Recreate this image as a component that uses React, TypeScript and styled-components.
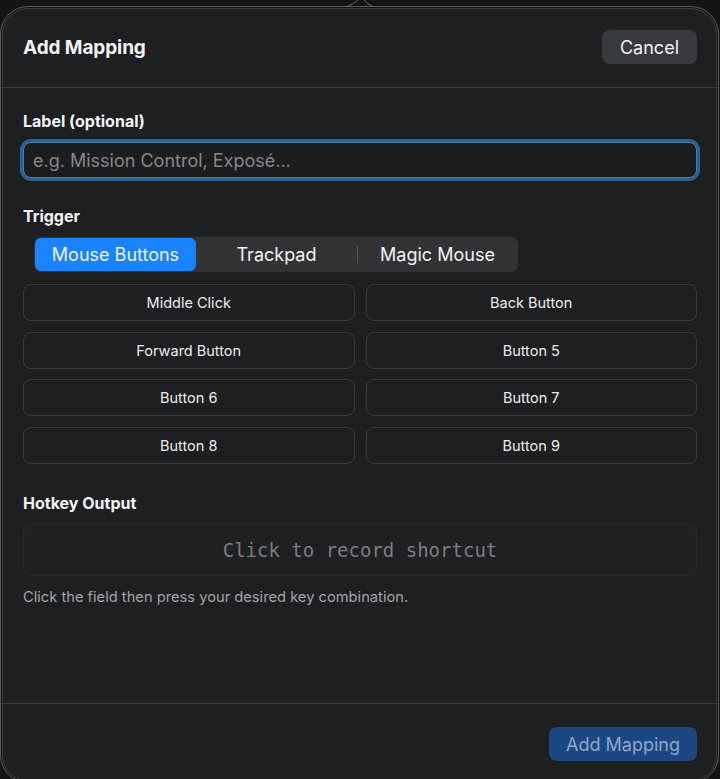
import styled, { createGlobalStyle } from "styled-components";

const GlobalStyle = createGlobalStyle`
	html, body {
		margin: 0;
		padding: 0;
		background: #141415;
		font-family: Inter, "Noto Sans", "Liberation Sans", sans-serif;
		-webkit-font-smoothing: antialiased;
	}
	* {
		box-sizing: border-box;
	}
`;

const Backdrop = styled.div`
	position: relative;
	width: 720px;
	height: 779px;
	overflow: hidden;
	padding-top: 6px;
`;

const Notch = styled.svg`
	position: absolute;
	top: 0;
	left: 340px;
`;

const Sheet = styled.div`
	width: 719px;
	height: 777px;
	display: flex;
	flex-direction: column;
	background: #1e1f21;
	border: 1px solid #58595c;
	border-radius: 28px;
	box-shadow: inset 0 0 0 1px #131314, inset 0 0 0 2px #3a3b3d;
	color: #f2f2f4;
`;

const Header = styled.div`
	height: 81px;
	display: flex;
	align-items: center;
	justify-content: space-between;
	padding: 0 21px 0 22px;
	border-bottom: 1px solid #3b3c3e;
`;

const Title = styled.h1`
	margin: 0;
	font-size: 19px;
	font-weight: 700;
	letter-spacing: -0.1px;
`;

const GhostButton = styled.button`
	height: 34px;
	padding: 0 18px;
	border: none;
	border-radius: 8px;
	background: #38393c;
	color: #f2f2f4;
	font-family: inherit;
	font-size: 18px;
`;

const Body = styled.div`
	flex: 1;
	display: flex;
	flex-direction: column;
	padding: 24px 21px 0 22px;
`;

const SectionLabel = styled.div<{ $gap?: number }>`
	font-size: 16px;
	font-weight: 700;
	line-height: 19px;
	margin-bottom: ${(p) => p.$gap ?? 12}px;
`;

const TextInput = styled.input`
	height: 36px;
	width: 100%;
	padding: 0 9px;
	border: 1px solid #3f7db2;
	border-radius: 8px;
	background: #1c1d1f;
	box-shadow: 0 0 0 3px #2b6390;
	color: #f2f2f4;
	font-family: inherit;
	font-size: 18px;
	outline: none;
	&::placeholder {
		color: #86868b;
	}
`;

const Section = styled.div<{ $top: number }>`
	margin-top: ${(p) => p.$top}px;
`;

const Segmented = styled.div`
	display: grid;
	grid-template-columns: repeat(3, 161px);
	width: 484px;
	height: 35px;
	margin-left: 11px;
	padding: 1px;
	border-radius: 7px;
	background: #323235;
`;

const Segment = styled.div<{ $active?: boolean; $divider?: boolean }>`
	position: relative;
	display: flex;
	align-items: center;
	justify-content: center;
	border-radius: 6px;
	font-size: 18px;
	color: #f2f2f4;
	background: ${(p) => (p.$active ? "#1a83fc" : "transparent")};
	&::before {
		content: "";
		display: ${(p) => (p.$divider ? "block" : "none")};
		position: absolute;
		left: 0;
		top: 8px;
		bottom: 8px;
		width: 1px;
		background: #55565a;
	}
`;

const TriggerGrid = styled.div`
	display: grid;
	grid-template-columns: 1fr 1fr;
	grid-auto-rows: 37px;
	column-gap: 11px;
	row-gap: 10.7px;
	margin-top: 12px;
`;

const TriggerButton = styled.div`
	display: flex;
	align-items: center;
	justify-content: center;
	border: 1px solid #3a3b3e;
	border-radius: 8px;
	font-size: 14.5px;
	color: #ececee;
`;

const ShortcutField = styled.div`
	height: 52px;
	display: flex;
	align-items: center;
	justify-content: center;
	border: 1px solid #27282a;
	border-radius: 8px;
	background: #1f2022;
	font-family: "DejaVu Sans Mono", "Liberation Mono", monospace;
	font-size: 19px;
	color: #7c7c80;
`;

const Hint = styled.p`
	margin: 12px 0 0;
	font-size: 14.7px;
	color: #a3a3a8;
`;

const Footer = styled.div`
	height: 79px;
	display: flex;
	justify-content: flex-end;
	align-items: flex-start;
	padding: 23px 21px 0;
	border-top: 1px solid #3b3c3e;
`;

const PrimaryButton = styled.button`
	height: 34px;
	padding: 0 17px;
	border: none;
	border-radius: 8px;
	background: #1c4782;
	color: #8ea8cd;
	font-family: inherit;
	font-size: 18px;
`;

const triggers = [
	"Middle Click",
	"Back Button",
	"Forward Button",
	"Button 5",
	"Button 6",
	"Button 7",
	"Button 8",
	"Button 9",
];

const tabs = ["Mouse Buttons", "Trackpad", "Magic Mouse"];

export default function App() {
	return (
		<Backdrop>
			<GlobalStyle />
			<Notch width="40" height="7" viewBox="0 0 40 7">
				<path d="M6 7 Q14 4 18 0 M24 0 Q27 4 34 7" stroke="#6a6a6d" strokeWidth="1" fill="none" />
			</Notch>
			<Sheet>
				<Header>
					<Title>Add Mapping</Title>
					<GhostButton>Cancel</GhostButton>
				</Header>
				<Body>
					<SectionLabel $gap={11}>Label (optional)</SectionLabel>
					<TextInput placeholder="e.g. Mission Control, Exposé..." />

					<Section $top={29}>
						<SectionLabel $gap={11}>Trigger</SectionLabel>
						<Segmented>
							{tabs.map((tab, i) => (
								<Segment key={tab} $active={i === 0} $divider={i === 2}>
									{tab}
								</Segment>
							))}
						</Segmented>
						<TriggerGrid>
							{triggers.map((name) => (
								<TriggerButton key={name}>{name}</TriggerButton>
							))}
						</TriggerGrid>
					</Section>

					<Section $top={30}>
						<SectionLabel $gap={11}>Hotkey Output</SectionLabel>
						<ShortcutField>Click to record shortcut</ShortcutField>
						<Hint>Click the field then press your desired key combination.</Hint>
					</Section>
				</Body>
				<Footer>
					<PrimaryButton>Add Mapping</PrimaryButton>
				</Footer>
			</Sheet>
		</Backdrop>
	);
}
